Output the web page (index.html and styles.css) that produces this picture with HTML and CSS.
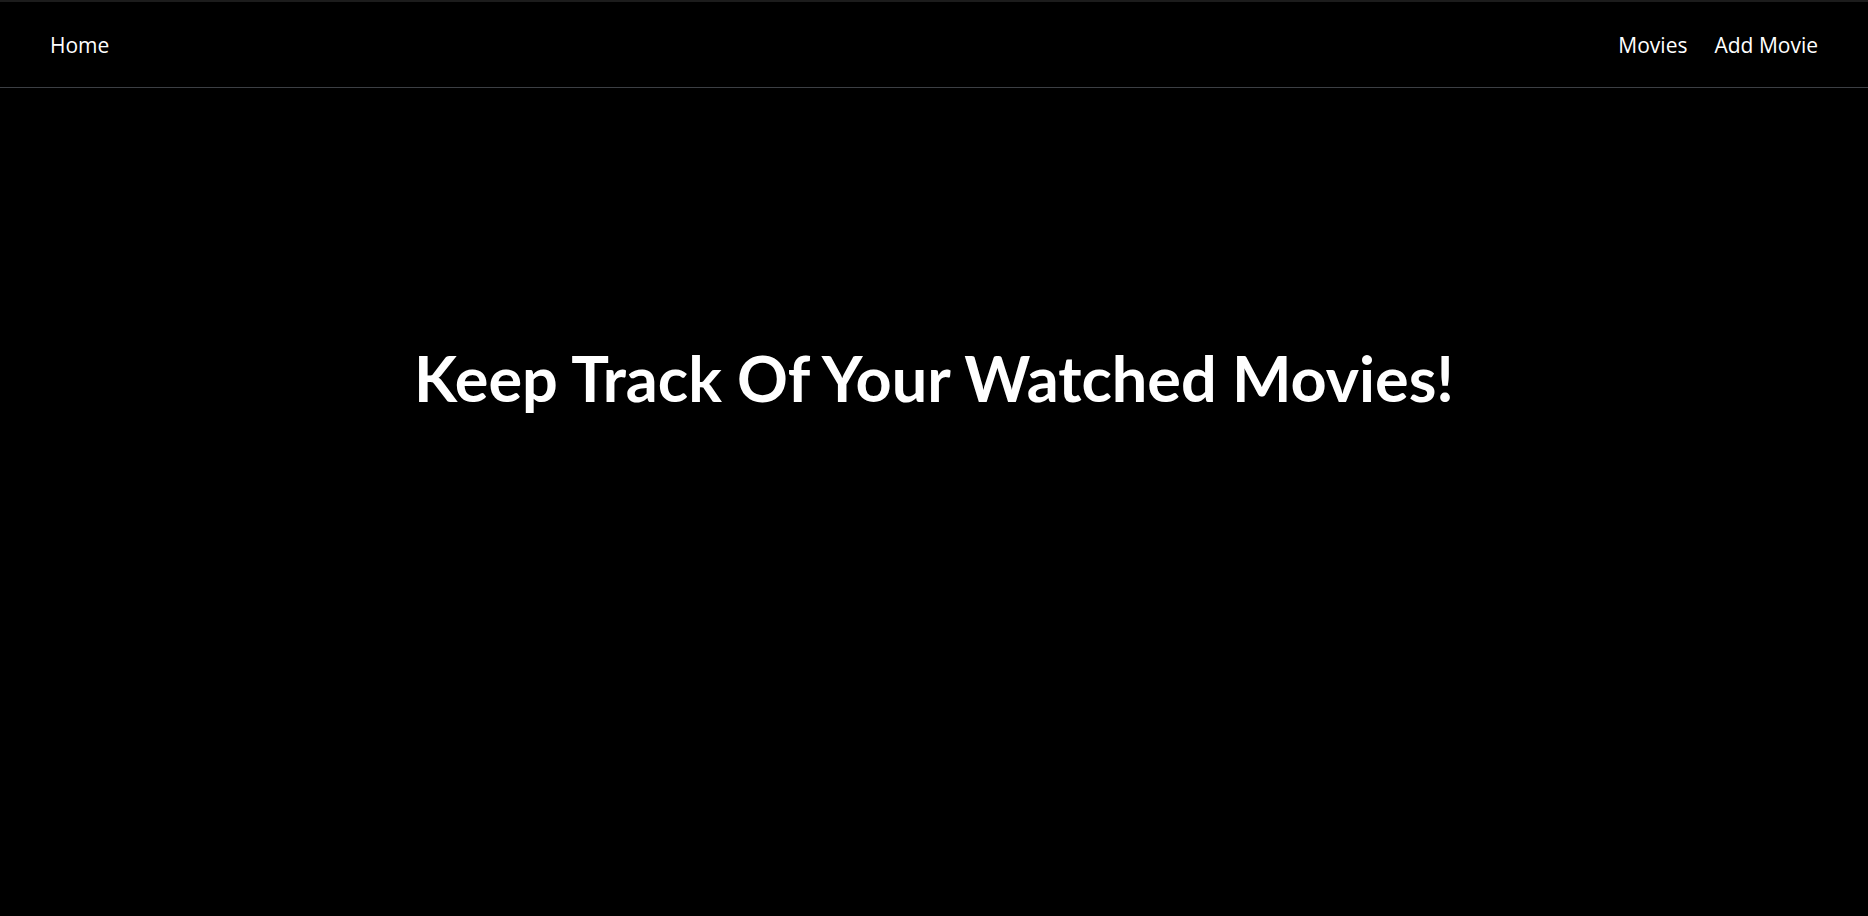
FILE: index.html
```html
<!DOCTYPE html>
<html lang="en">
<head>
<meta charset="utf-8">
<title>Movies</title>
<link rel="stylesheet" href="styles.css">
</head>
<body>
<nav class="navbar">
  <a class="nav-link" href="#">Home</a>
  <div class="nav-right">
    <a class="nav-link" href="#">Movies</a>
    <a class="nav-link" href="#">Add Movie</a>
  </div>
</nav>
<main class="hero">
  <h1 class="hero-title">Keep Track Of Your Watched Movies!</h1>
</main>
</body>
</html>
```

FILE: styles.css
```css
html, body {
  margin: 0;
  padding: 0;
  background: #000;
  color: #fff;
  font-family: "Open Sans", "Noto Sans", sans-serif;
}
body {
  border-top: 2px solid #1c1c1c;
  min-height: 914px;
}
.navbar {
  height: 86px;
  box-sizing: border-box;
  border-bottom: 1px solid #3c3f44;
  display: flex;
  align-items: center;
  justify-content: space-between;
  padding: 0 50px 0 50px;
}
.nav-right {
  display: flex;
  gap: 27px;
}
.nav-link {
  color: #fff;
  text-decoration: none;
  font-size: 21px;
}
.hero {
  display: flex;
  justify-content: center;
  padding-top: 252px;
}
.hero-title {
  margin: 0;
  font-family: "Lato", "Open Sans", sans-serif;
  font-size: 63px;
  font-weight: 700;
  line-height: 1.2;
}
```
